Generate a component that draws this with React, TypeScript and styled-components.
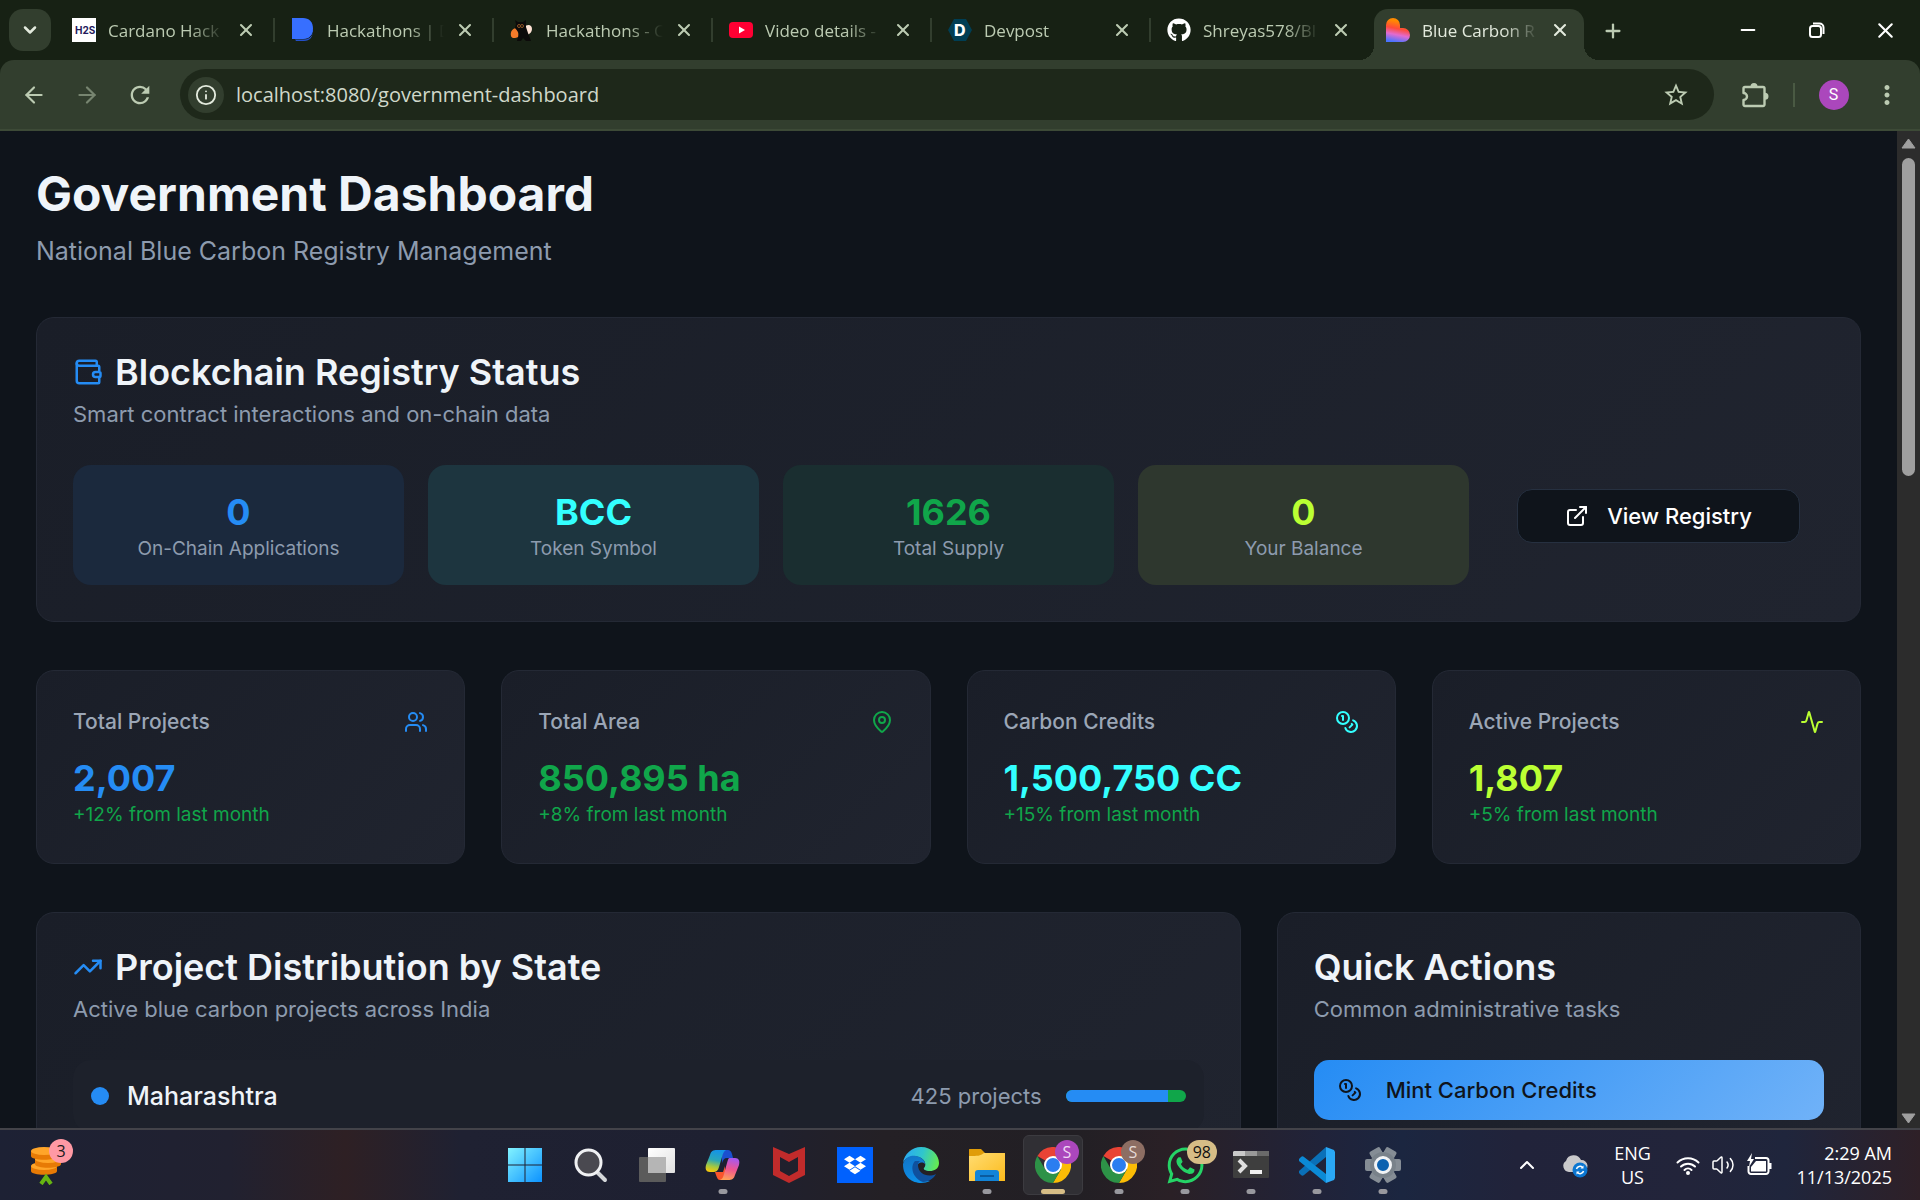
import React from 'react';
import styled, { createGlobalStyle } from 'styled-components';
import {
  Activity, ArrowLeft, ArrowRight, ChevronDown, ChevronUp, Coins, ExternalLink, Info, MapPin, Minus, Plus,
  TrendingUp, Users, Volume2, Wallet, X,
} from 'lucide-react';
import { FaDropbox, FaGithub, FaWhatsapp } from 'react-icons/fa';
import { MdRefresh, MdStarBorder, MdMoreVert } from 'react-icons/md';

const color = {
  frame: '#172114',
  toolbar: '#323e2e',
  field: '#1e281a',
  chromeText: '#bccbb2',
  page: '#0f141b',
  text: '#eff4f9',
  muted: '#8d9bae',
  blue: '#258cf4',
  green: '#10a64a',
  cyan: '#33ffff',
  lime: '#bbff33',
};

const uiFont = '"Open Sans", "Noto Sans", sans-serif';
const pageFont = 'Inter, "Noto Sans", sans-serif';

const GlobalStyle = createGlobalStyle`
  *, *::before, *::after { box-sizing: border-box; }
  body { margin: 0; background: ${color.page}; }
  h1, h2, h3, p, ul { margin: 0; padding: 0; }
  ul { list-style: none; }
  button { border: 0; padding: 0; background: none; color: inherit; font: inherit; cursor: pointer; }
  svg { display: block; flex: none; }
`;

const Desktop = styled.div`
  display: flex;
  flex-direction: column;
  height: 100vh;
  overflow: hidden;
  background: ${color.page};
  font-family: ${uiFont};
`;

/* ---------- browser frame ---------- */

const TabStrip = styled.div`
  display: flex;
  height: 60px;
  flex: none;
  padding: 0 0 0 9px;
  background: ${color.frame};
  color: ${color.chromeText};
`;

const TabSearch = styled.button`
  display: grid;
  place-items: center;
  width: 42px;
  height: 42px;
  margin: 9px 5px 0 0;
  border-radius: 14px;
  background: ${color.toolbar};
  color: #e3eadd;
`;

const Tabs = styled.div`
  display: flex;
  flex: 0 1 1533px;
  min-width: 0;
`;

const TabItem = styled.div<{ $active?: boolean; $divider?: boolean }>`
  position: relative;
  display: flex;
  flex: 1 1 0;
  align-items: center;
  min-width: 0;
  margin-top: 9px;
  padding: 0 17px 9px 16px;
  color: ${(p) => (p.$active ? '#e3eadd' : color.chromeText)};

  &::after {
    content: '';
    display: ${(p) => (p.$divider ? 'block' : 'none')};
    position: absolute;
    right: 0;
    top: 9px;
    width: 2px;
    height: 24px;
    background: ${color.toolbar};
  }
`;

const ActiveShape = styled.span`
  position: absolute;
  inset: 0 5px 0 4px;
  border-radius: 14px 14px 0 0;
  background: ${color.toolbar};

  &::before, &::after {
    content: '';
    position: absolute;
    bottom: 0;
    width: 15px;
    height: 15px;
  }
  &::before {
    right: 100%;
    background: radial-gradient(circle at 0 0, transparent 15px, ${color.toolbar} 15px);
  }
  &::after {
    left: 100%;
    background: radial-gradient(circle at 100% 0, transparent 15px, ${color.toolbar} 15px);
  }
`;

const Favicon = styled.span`
  position: relative;
  display: block;
  width: 24px;
  height: 24px;
  flex: none;
`;

const TabTitle = styled.button`
  position: relative;
  flex: 1;
  min-width: 0;
  margin: 2px 9px 0 12px;
  overflow: hidden;
  font-size: 17px;
  line-height: 24px;
  text-align: left;
  white-space: nowrap;
  mask-image: linear-gradient(90deg, #000 calc(100% - 36px), transparent);
`;

const TabClose = styled.button`
  position: relative;
  display: grid;
  place-items: center;
  width: 24px;
  height: 24px;
  flex: none;
`;

const NewTab = styled.button`
  display: grid;
  place-items: center;
  width: 48px;
  height: 60px;
  padding-top: 1px;
  color: ${color.chromeText};
`;

const WindowControls = styled.div`
  display: flex;
  margin-left: auto;
  color: #ffffff;
`;

const WindowButton = styled.button`
  display: grid;
  place-items: center;
  width: 69px;
  height: 60px;
`;

const Toolbar = styled.div`
  flex: none;
  background: ${color.frame};
`;

const ToolbarInner = styled.div`
  display: flex;
  align-items: center;
  height: 71px;
  padding: 0 7px;
  border-bottom: 2px solid #3d4a37;
  border-radius: 14px 14px 0 0;
  background: ${color.toolbar};
  color: ${color.chromeText};
`;

const ToolButton = styled.button<{ $dim?: boolean }>`
  display: grid;
  place-items: center;
  width: 53px;
  height: 48px;
  opacity: ${(p) => (p.$dim ? 0.5 : 1)};
`;

const AddressBar = styled.div`
  display: flex;
  align-items: center;
  flex: 1;
  height: 51px;
  margin: 0 14px;
  padding: 0 12px 0 8px;
  border-radius: 26px;
  background: ${color.field};
`;

const SiteInfo = styled.button`
  display: grid;
  place-items: center;
  width: 36px;
  height: 36px;
  margin-right: 12px;
  border-radius: 50%;
  background: ${color.toolbar};
  color: #e3eadd;
`;

const Address = styled.input`
  flex: 1;
  min-width: 0;
  height: 36px;
  border: 0;
  padding: 0;
  outline: 0;
  background: transparent;
  color: #d0d8ca;
  font: 20px ${uiFont};
`;

const ToolbarDivider = styled.span`
  width: 2px;
  height: 24px;
  margin: 0 12px;
  background: #4a5a43;
`;

const Avatar = styled.span`
  display: grid;
  place-items: center;
  width: 30px;
  height: 30px;
  border-radius: 50%;
  background: #ab47bc;
  color: #ffffff;
  font: 16px Roboto, sans-serif;
`;

/* ---------- page ---------- */

const Viewport = styled.div`
  display: flex;
  flex: 1;
  min-height: 0;
  overflow: hidden;
`;

const Page = styled.main`
  flex: 1;
  min-width: 0;
  height: 100%;
  padding: 36px;
  overflow: hidden;
  background: ${color.page};
  color: ${color.text};
  font-family: ${pageFont};
`;

const Scrollbar = styled.div`
  display: flex;
  flex-direction: column;
  align-items: center;
  width: 23px;
  flex: none;
  padding: 7px 0 4px;
  background: #2c2c2c;
`;

const ScrollThumb = styled.div`
  width: 13px;
  height: 318px;
  margin: 9px 0 auto;
  border-radius: 7px;
  background: #9f9f9f;
`;

const PageHeader = styled.header`
  display: grid;
  gap: 12px;
  margin-bottom: 48px;
`;

const PageTitle = styled.h1`
  font-size: 48px;
  font-weight: 700;
  line-height: 54px;
`;

const PageSubtitle = styled.p`
  color: ${color.muted};
  font-size: 25px;
  line-height: 36px;
`;

const Card = styled.section`
  min-width: 0;
  padding: 36px;
  border: 1px solid #242935;
  border-radius: 18px;
  background: linear-gradient(135deg, #1a1e28, #20242f);
`;

const CardHeader = styled.div`
  display: grid;
  gap: 9px;
  margin-bottom: 36px;
`;

const CardTitle = styled.h2`
  display: flex;
  align-items: center;
  gap: 12px;
  font-size: 36px;
  font-weight: 600;
  line-height: 36px;
  white-space: nowrap;
`;

const CardText = styled.p`
  color: ${color.muted};
  font-size: 22px;
  line-height: 30px;
`;

const TileGrid = styled.div`
  display: grid;
  grid-template-columns: repeat(5, 1fr);
  gap: 24px;
`;

const Tile = styled.div<{ $bg?: string }>`
  padding: 24px;
  border-radius: 18px;
  background: ${(p) => p.$bg ?? 'transparent'};
  text-align: center;
`;

const Value = styled.p<{ $color: string }>`
  color: ${(p) => p.$color};
  font-size: 36px;
  font-weight: 700;
  line-height: 46px;
  padding-bottom: 2px;
`;

const Caption = styled.p<{ $color?: string }>`
  color: ${(p) => p.$color ?? color.muted};
  font-size: 19px;
  line-height: 24px;
`;

const RegistryButton = styled.button`
  display: flex;
  align-items: center;
  justify-content: center;
  gap: 18px;
  width: 100%;
  height: 54px;
  border: 1px solid #263040;
  border-radius: 15px;
  background: ${color.page};
  color: #ffffff;
  font-size: 22px;
  font-weight: 500;
`;

const MetricGrid = styled.div`
  display: grid;
  grid-template-columns: repeat(4, 1fr);
  gap: 36px;
  margin: 48px 0;
`;

const MetricHead = styled.div`
  display: flex;
  align-items: center;
  justify-content: space-between;
  margin-bottom: 18px;
`;

const MetricTitle = styled.h3`
  color: #9ba6b6;
  font-size: 21px;
  font-weight: 500;
  line-height: 30px;
`;

const LowerGrid = styled.div`
  display: grid;
  grid-template-columns: repeat(3, 1fr);
  gap: 36px;

  > :first-child { grid-column: span 2; }
`;

const StateRow = styled.li`
  display: flex;
  align-items: center;
  height: 72px;
  padding: 0 18px;
  border-radius: 18px;
  background: #1d212b;
`;

const StateDot = styled.span`
  width: 18px;
  height: 18px;
  margin-right: 18px;
  border-radius: 50%;
  background: ${color.blue};
`;

const StateName = styled.span`
  flex: 1;
  font-size: 25px;
  font-weight: 500;
`;

const StateCount = styled.span`
  margin-right: 24px;
  color: ${color.muted};
  font-size: 22px;
`;

const Meter = styled.span`
  display: block;
  width: 120px;
  height: 12px;
  overflow: hidden;
  border-radius: 6px;
  background: ${color.green};
`;

const MeterFill = styled.span`
  display: block;
  height: 100%;
  background: ${color.blue};
`;

const MintButton = styled.button`
  display: flex;
  align-items: center;
  gap: 24px;
  width: 100%;
  height: 60px;
  padding: 0 24px;
  border-radius: 15px;
  background: linear-gradient(135deg, #258cf4, #70b2f8);
  color: ${color.page};
  font-size: 22px;
  font-weight: 500;
`;

/* ---------- taskbar ---------- */

const Taskbar = styled.footer`
  display: grid;
  grid-template-columns: 1fr auto 1fr;
  align-items: center;
  height: 72px;
  flex: none;
  padding: 0 28px 0 16px;
  border-top: 2px solid #434349;
  background: linear-gradient(90deg, #1d2134 0%, #212130 12%, #2e2024 18%, #1f2132 24%, #1e2031 38%,
    #242025 46%, #221f24 56%, #2a2026 61%, #20233a 69%, #1b2640 73%, #21233a 79%, #22243a 88%, #1f253c 93%, #2e2027 100%);
  color: #ffffff;
`;

const WidgetButton = styled.button`
  position: relative;
  display: grid;
  place-items: center;
  width: 60px;
  height: 60px;
`;

const Apps = styled.nav`
  display: flex;
  gap: 6px;
`;

const AppButton = styled.button<{ $active?: boolean }>`
  position: relative;
  display: grid;
  place-items: center;
  width: 60px;
  height: 60px;
  border: 1px solid ${(p) => (p.$active ? '#3c3b40' : 'transparent')};
  border-radius: 6px;
  background: ${(p) => (p.$active ? '#302f34' : 'transparent')};
`;

const RunMark = styled.span<{ $active?: boolean }>`
  position: absolute;
  bottom: 0;
  left: 50%;
  width: ${(p) => (p.$active ? 24 : 9)}px;
  height: 5px;
  border-radius: 3px;
  background: ${(p) => (p.$active ? '#d6bd86' : '#98989e')};
  transform: translateX(-50%);
`;

const Badge = styled.span<{ $bg: string; $fg: string; $wide?: boolean }>`
  position: absolute;
  top: 4px;
  right: ${(p) => (p.$wide ? -3 : 3)}px;
  min-width: 24px;
  height: 24px;
  padding: 0 ${(p) => (p.$wide ? 6 : 0)}px;
  border-radius: 12px;
  background: ${(p) => p.$bg};
  color: ${(p) => p.$fg};
  font-size: 16px;
  line-height: 24px;
  text-align: center;
`;

const Tray = styled.div`
  display: flex;
  align-items: center;
  justify-content: flex-end;
  font-size: 18px;
  line-height: 24px;
`;

const TrayButton = styled.button`
  display: grid;
  place-items: center;
  width: 48px;
  height: 48px;
`;

const Language = styled.button`
  width: 66px;
  text-align: center;
`;

const Status = styled.button`
  display: flex;
  align-items: center;
  gap: 11px;
  padding: 0 24px 0 11px;
`;

const Clock = styled.button`
  text-align: right;
  white-space: nowrap;
`;

/* ---------- drawings ---------- */

const svgBox = { width: 24, height: 24, viewBox: '0 0 24 24' };
const appBox = { width: 36, height: 36, viewBox: '0 0 36 36' };

const Favicons: Record<string, React.ReactNode> = {
  hack: (
    <svg {...svgBox}>
      <rect width="24" height="24" fill="#fff" />
      <text x="3" y="16" fontFamily="Inter, sans-serif" fontSize="10" fontWeight="700" fill="#241a5c">H2S</text>
    </svg>
  ),
  dora: (
    <svg {...svgBox}>
      <path d="M2 18l3 5h8c6 0 9-4 9-11z" fill="#2450c8" />
      <path d="M2 20l2 1h9c5 0 8-3 9-7" fill="none" stroke="#172114" strokeWidth="1" />
      <path d="M1 0h11c6 0 10 4 10 10.500S18 21 12 21H1z" fill="#376fff" />
    </svg>
  ),
  cat: (
    <svg {...svgBox}>
      <path d="M1 18c-1-5 2-8 6-8l2 9c-4 1-7 2-8-1z" fill="#f47b2a" />
      <path d="M14 9c3-3 8-3 8 2 0 3-2 5-5 6z" fill="#ffe3d6" />
      <path d="M5 2l3 2h5l3-2v7l2 6 3 8h-5l-3-3-2 3H7l2-8-4-5 1-4z" fill="#0c0a0a" />
      <circle cx="9" cy="8" r="1.500" fill="none" stroke="#8c5324" />
      <circle cx="12" cy="8" r="1.500" fill="none" stroke="#8c5324" />
    </svg>
  ),
  video: (
    <svg {...svgBox}>
      <rect y="4" width="24" height="16" rx="4" fill="#ff0033" />
      <path d="M10 8.500v7l6-3.500z" fill="#fff" />
    </svg>
  ),
  devpost: (
    <svg {...svgBox}>
      <path d="M6 1h12l6 11-6 11H6L0 12z" fill="#003e54" />
      <text x="6" y="18" fontFamily="Inter, sans-serif" fontSize="16" fontWeight="800" fill="#fff">D</text>
    </svg>
  ),
  github: <FaGithub size={24} color="#fff" />,
  lovable: (
    <svg {...svgBox}>
      <defs>
        <linearGradient id="heart" x1="0.600" y1="0" x2="0.400" y2="1">
          <stop offset="0.150" stopColor="#ff8a00" />
          <stop offset="0.450" stopColor="#ff4b3a" />
          <stop offset="0.700" stopColor="#e26bd0" />
          <stop offset="1" stopColor="#4b73ff" />
        </linearGradient>
      </defs>
      <path d="M0 7a7 7 0 0 1 14 0v3h3a7 7 0 0 1 0 14H0z" fill="url(#heart)" />
    </svg>
  ),
};

const RestoreIcon = () => (
  <svg width="16" height="16" viewBox="0 0 16 16" fill="none" stroke="#fff" strokeWidth="2">
    <rect x="1" y="4" width="11" height="11" rx="2.500" />
    <path d="M4 1.500h6.500a4 4 0 0 1 4 4V12" />
  </svg>
);

const ExtensionsIcon = () => (
  <svg width="28" height="28" viewBox="0 0 28 28">
    <path
      d="M4 6h18a1.500 1.500 0 0 1 1.500 1.500v16A1.500 1.500 0 0 1 22 25H4a1.500 1.500 0 0 1-1.500-1.500v-4.500a3.500 3.500 0 0 0 0-7V7.500A1.500 1.500 0 0 1 4 6z"
      fill="none"
      stroke="currentColor"
      strokeWidth="2.400"
      strokeLinejoin="round"
    />
    <path d="M9.500 5.500a3.500 3.500 0 0 1 7 0zM24 11.800a3.500 3.500 0 0 1 0 7z" fill="currentColor" />
  </svg>
);

const CoinStackIcon = () => (
  <svg width="30" height="40" viewBox="0 0 30 40">
    {[20, 13, 5].map((y, i) => (
      <g key={y} transform={`translate(${i === 1 ? 4 : 0} ${y - 3})`}>
        <path d="M0 4v5c0 5 26 5 26 0V4z" fill="#e77a05" />
        <ellipse cx="13" cy="4" rx="13" ry="4" fill="#ffa529" />
      </g>
    ))}
    <path d="M10 39l5-7 5 7" fill="none" stroke="#67b512" strokeWidth="4" />
  </svg>
);

const StartIcon = () => (
  <svg {...appBox}>
    <defs>
      <linearGradient id="start" x1="0" y1="0" x2="1" y2="1">
        <stop stopColor="#82f3ff" />
        <stop offset="1" stopColor="#0c92ff" />
      </linearGradient>
    </defs>
    <path d="M1 1h16.500v16.500H1zM18.500 1H35v16.500H18.500zM1 18.500h16.500V35H1zM18.500 18.500H35V35H18.500z" fill="url(#start)" />
  </svg>
);

const SearchIcon = () => (
  <svg {...appBox}>
    <path d="M24 25l8 8" stroke="#d5d7da" strokeWidth="4" strokeLinecap="round" />
    <circle cx="15.500" cy="15.500" r="12.500" fill="#4a4950" stroke="#f0f1f3" strokeWidth="3" />
  </svg>
);

const TaskViewIcon = () => (
  <svg {...appBox}>
    <defs>
      <linearGradient id="pane" x1="0" y1="0" x2="1" y2="1">
        <stop stopColor="#ffffff" />
        <stop offset="1" stopColor="#e0e0e0" />
      </linearGradient>
    </defs>
    <rect x="0" y="10" width="27" height="25" rx="1" fill="#5b5b5b" />
    <rect x="9" y="1" width="27" height="25" rx="1" fill="url(#pane)" />
    <rect x="9" y="10" width="18" height="16" fill="#b5b5b5" />
  </svg>
);

const CopilotIcon = () => (
  <svg {...appBox}>
    <defs>
      <linearGradient id="cpA" x1="0.500" y1="0" x2="0.300" y2="1">
        <stop stopColor="#1493e8" />
        <stop offset="0.450" stopColor="#2aa7b8" />
        <stop offset="0.750" stopColor="#a5c840" />
        <stop offset="1" stopColor="#f7c90b" />
      </linearGradient>
      <linearGradient id="cpB" x1="0.600" y1="0" x2="0.400" y2="1">
        <stop stopColor="#a658f0" />
        <stop offset="0.500" stopColor="#ef5590" />
        <stop offset="1" stopColor="#ffa057" />
      </linearGradient>
    </defs>
    <path d="M17 3h6c2 0 3 1 4 4l1 4h-6c-3 0-4 2-5 5z" fill="#1b4fd0" />
    <path d="M10 25h8l2-6v8c-1 4-1 6 1 6h-6c-2 0-3-2-4-5z" fill="#f9552c" />
    <path d="M12 3h9c-2 1-3 3-4 7l-3 10c-1 4-3 5-6 5H5c-4 0-5-3-4-7L5 8c1-4 3-5 7-5z" fill="url(#cpA)" />
    <path d="M25 11h5c4 0 5 3 4 7l-4 10c-1 4-3 5-7 5h-8c2-1 3-2 4-6l3-11c1-3 1-5 3-5z" fill="url(#cpB)" />
  </svg>
);

const McAfeeIcon = () => (
  <svg {...appBox}>
    <path d="M2 0l16 7 16-7v28l-16 8L2 28zM9 10v14l9 5 9-5V10l-9 5z" fill="#c12b2b" fillRule="evenodd" />
  </svg>
);

const DropboxTile = styled.span`
  display: grid;
  place-items: center;
  width: 36px;
  height: 36px;
  background: #0061fe;
  color: #ffffff;
`;

const EdgeIcon = () => (
  <svg {...appBox}>
    <defs>
      <linearGradient id="edgeTop" x1="0" y1="0.400" x2="1" y2="0.600">
        <stop stopColor="#2aa9f3" />
        <stop offset="0.500" stopColor="#30c6cc" />
        <stop offset="1" stopColor="#66eb4e" />
      </linearGradient>
      <linearGradient id="edgeLow" x1="0" y1="0" x2="0.300" y2="1">
        <stop stopColor="#1272c4" />
        <stop offset="1" stopColor="#0c8fe8" />
      </linearGradient>
    </defs>
    <path d="M0 16C1 7 9 0 18 0c11 0 18 8 18 16 0 6-5 8-9 8-5 0-7-2-6-3 3-3 1-9-5-11C9 8 2 11 0 16z" fill="url(#edgeTop)" />
    <path d="M0 17c2-7 8-9 13-8 5 1 9 4 9 8-1-2-7-3-8 3-1 6 5 14 13 14-10 5-27 1-27-17z" fill="url(#edgeLow)" />
    <path d="M12 14c-5 5-3 17 8 21 6 0 11-4 13-8-8 4-18 0-18-9 0-2 1-4 3-4z" fill="#0f519e" />
  </svg>
);

const FolderIcon = () => (
  <svg {...appBox}>
    <defs>
      <linearGradient id="folder" x1="0" y1="0" x2="1" y2="1">
        <stop stopColor="#ffdc72" />
        <stop offset="1" stopColor="#fcbb1c" />
      </linearGradient>
    </defs>
    <path d="M0 3c0-1 0-1 1-1h11l4 4H36v5H0z" fill="#e09c08" />
    <path d="M0 9c9 0 11 0 15-3h20c1 0 1 0 1 1v27H0z" fill="url(#folder)" />
    <path d="M6 34v-8c0-2 1-3 3-3h18c2 0 3 1 3 3v8z" fill="#1284d8" />
    <path d="M11 29h14" stroke="#0b5b9e" strokeWidth="2" />
  </svg>
);

const ChromeIcon = () => (
  <svg {...appBox}>
    <path d="M18 18L2.400 9A18 18 0 0 1 33.600 9z" fill="#e94335" />
    <path d="M18 9h15.600A18 18 0 0 1 18 36l7.800-13.500z" fill="#fbbc05" />
    <path d="M25.800 22.500L18 36A18 18 0 0 1 2.400 9l7.800 13.500z" fill="#2d9247" />
    <circle cx="18" cy="18" r="9" fill="#fff" />
    <circle cx="18" cy="18" r="7" fill="#2b7df0" />
  </svg>
);

const TerminalIcon = () => (
  <svg {...appBox}>
    <rect y="4" width="36" height="27" rx="1" fill="#3e3e3e" />
    <path d="M0 9V5l1-1h11v5z" fill="#c9c9c9" />
    <path d="M12 4h12v5H12z" fill="#999" />
    <path d="M24 4h12v5H24z" fill="#6a6a6a" />
    <path d="M6 13l6 6-6 6" fill="none" stroke="#dedede" strokeWidth="4" />
    <rect x="17" y="23" width="12" height="4" fill="#f0f0f0" />
  </svg>
);

const CodeIcon = () => (
  <svg {...appBox}>
    <path d="M27 0v10L5 28c-1 1-2 1-3 0l-2-2v-2z" fill="#0a70b8" />
    <path d="M0 12l2-2c1-1 2-1 3 0l22 17v9L0 14z" fill="#0b8ad6" />
    <path d="M27 0l8 3 1 2v26l-1 2-8 3z" fill="#2aa8f5" />
  </svg>
);

const GearIcon = () => (
  <svg {...appBox}>
    {[0, 60, 120].map((turn) => (
      <rect key={turn} x="12" y="0" width="12" height="36" rx="2" fill="#858d95" transform={`rotate(${turn + 30} 18 18)`} />
    ))}
    <circle cx="18" cy="18" r="13" fill="#79828a" />
    <circle cx="18" cy="18" r="7.500" fill="#0c62b0" stroke="#f1f3f5" strokeWidth="3" />
  </svg>
);

const CloudIcon = () => (
  <svg width="26" height="26" viewBox="0 0 26 26">
    <path d="M7 20a6 6 0 0 1-3-11A8 8 0 0 1 19 8a6 6 0 0 1 1 12z" fill="#c9c9cb" />
    <circle cx="18" cy="18" r="7.500" fill="#0b76d1" />
    <path d="M14.500 17a3.500 3.500 0 0 1 6-1.500M21.500 19a3.500 3.500 0 0 1-6 1.500" fill="none" stroke="#fff" strokeWidth="1.500" />
    <path d="M21.500 13.500v3h-3zM14.500 22.500v-3h3z" fill="#fff" />
  </svg>
);

const WifiIcon = () => (
  <svg width="24" height="20" viewBox="0 0 24 20" fill="none" stroke="#fff" strokeWidth="2" strokeLinecap="round">
    <path d="M1.500 7.500a15 15 0 0 1 21 0M5 11.500a10 10 0 0 1 14 0M8.500 15a5 5 0 0 1 7 0" />
    <circle cx="12" cy="18" r="1" fill="#fff" />
  </svg>
);

const BatteryIcon = () => (
  <svg width="26" height="24" viewBox="0 0 26 24">
    <path d="M9 5h11a2.500 2.500 0 0 1 2.500 2.500v11A2.500 2.500 0 0 1 20 21H5a2.500 2.500 0 0 1-2.500-2.500V13" fill="none" stroke="#fff" strokeWidth="2" />
    <path d="M10 8h10v10.500H5V14z" fill="#fff" />
    <path d="M23 10h2.500v6H23zM6 0L1 8h3l-1 6 5-8H5z" fill="#fff" />
  </svg>
);

const ScrollArrow = ({ down }: { down?: boolean }) => (
  <svg width="15" height="11" viewBox="0 0 15 11">
    <path d={down ? 'M1 1h13L7.500 10z' : 'M1 10h13L7.500 1z'} fill="#9f9f9f" stroke="#9f9f9f" strokeLinejoin="round" />
  </svg>
);

/* ---------- data ---------- */

const tabs = [
  { icon: 'hack', title: 'Cardano Hack' },
  { icon: 'dora', title: 'Hackathons | D' },
  { icon: 'cat', title: 'Hackathons - C' },
  { icon: 'video', title: 'Video details -' },
  { icon: 'devpost', title: 'Devpost' },
  { icon: 'github', title: 'Shreyas578/Bl' },
  { icon: 'lovable', title: 'Blue Carbon R', active: true },
];

const tiles = [
  { value: '0', label: 'On-Chain Applications', tone: color.blue, bg: '#1b293d' },
  { value: 'BCC', label: 'Token Symbol', tone: color.cyan, bg: '#1d353f' },
  { value: '1626', label: 'Total Supply', tone: color.green, bg: '#1a2e30' },
  { value: '0', label: 'Your Balance', tone: color.lime, bg: '#2e372e' },
];

const metrics = [
  { title: 'Total Projects', value: '2,007', change: '+12% from last month', tone: color.blue, Icon: Users },
  { title: 'Total Area', value: '850,895 ha', change: '+8% from last month', tone: color.green, Icon: MapPin },
  { title: 'Carbon Credits', value: '1,500,750 CC', change: '+15% from last month', tone: color.cyan, Icon: Coins },
  { title: 'Active Projects', value: '1,807', change: '+5% from last month', tone: color.lime, Icon: Activity },
];

const states = [{ name: 'Maharashtra', count: 425, share: 85 }];

type TaskbarApp = {
  name: string;
  icon: React.ReactNode;
  running?: boolean;
  active?: boolean;
  badge?: { text: string; bg: string; fg: string; wide?: boolean };
};

const apps: TaskbarApp[] = [
  { name: 'Start', icon: <StartIcon /> },
  { name: 'Search', icon: <SearchIcon /> },
  { name: 'Task view', icon: <TaskViewIcon /> },
  { name: 'Copilot', icon: <CopilotIcon />, running: true },
  { name: 'McAfee', icon: <McAfeeIcon /> },
  { name: 'Dropbox', icon: <DropboxTile><FaDropbox size={22} /></DropboxTile> },
  { name: 'Edge', icon: <EdgeIcon /> },
  { name: 'File Explorer', icon: <FolderIcon />, running: true },
  { name: 'Chrome', icon: <ChromeIcon />, running: true, active: true, badge: { text: 'S', bg: '#ab47bc', fg: '#f0d8f4' } },
  { name: 'Chrome, second profile', icon: <ChromeIcon />, running: true, badge: { text: 'S', bg: '#8d6e63', fg: '#e6dbd7' } },
  { name: 'WhatsApp', icon: <FaWhatsapp size={41} color="#25d366" />, running: true, badge: { text: '98', bg: '#d6bd86', fg: '#101010', wide: true } },
  { name: 'Terminal', icon: <TerminalIcon />, running: true },
  { name: 'Visual Studio Code', icon: <CodeIcon />, running: true },
  { name: 'Settings', icon: <GearIcon />, running: true },
];

/* ---------- sections ---------- */

const Browser = () => (
  <>
    <TabStrip>
      <TabSearch aria-label="Search tabs"><ChevronDown size={20} strokeWidth={3} /></TabSearch>
      <Tabs>
        {tabs.map((tab, i) => (
          <TabItem key={tab.icon} $active={tab.active} $divider={i < tabs.length - 2}>
            {tab.active && <ActiveShape />}
            <Favicon>{Favicons[tab.icon]}</Favicon>
            <TabTitle>{tab.title}</TabTitle>
            <TabClose aria-label={`Close ${tab.title}`}><X size={20} strokeWidth={2.5} /></TabClose>
          </TabItem>
        ))}
      </Tabs>
      <NewTab aria-label="New tab"><Plus size={22} strokeWidth={2.5} /></NewTab>
      <WindowControls>
        <WindowButton aria-label="Minimize"><Minus size={22} /></WindowButton>
        <WindowButton aria-label="Restore"><RestoreIcon /></WindowButton>
        <WindowButton aria-label="Close window"><X size={25} strokeWidth={2} /></WindowButton>
      </WindowControls>
    </TabStrip>
    <Toolbar>
      <ToolbarInner>
        <ToolButton aria-label="Back"><ArrowLeft size={26} /></ToolButton>
        <ToolButton aria-label="Forward" $dim><ArrowRight size={26} /></ToolButton>
        <ToolButton aria-label="Reload"><MdRefresh size={28} /></ToolButton>
        <AddressBar>
          <SiteInfo aria-label="Site information"><Info size={22} /></SiteInfo>
          <Address aria-label="Address" defaultValue="localhost:8080/government-dashboard" />
          <ToolButton aria-label="Bookmark this page"><MdStarBorder size={28} /></ToolButton>
        </AddressBar>
        <ToolButton aria-label="Extensions"><ExtensionsIcon /></ToolButton>
        <ToolbarDivider />
        <ToolButton aria-label="Profile"><Avatar>S</Avatar></ToolButton>
        <ToolButton aria-label="Menu"><MdMoreVert size={30} /></ToolButton>
      </ToolbarInner>
    </Toolbar>
  </>
);

const Dashboard = () => (
  <Page>
    <PageHeader>
      <PageTitle>Government Dashboard</PageTitle>
      <PageSubtitle>National Blue Carbon Registry Management</PageSubtitle>
    </PageHeader>

    <Card>
      <CardHeader>
        <CardTitle><Wallet size={30} color={color.blue} />Blockchain Registry Status</CardTitle>
        <CardText>Smart contract interactions and on-chain data</CardText>
      </CardHeader>
      <TileGrid>
        {tiles.map((tile) => (
          <Tile key={tile.label} $bg={tile.bg}>
            <Value $color={tile.tone}>{tile.value}</Value>
            <Caption>{tile.label}</Caption>
          </Tile>
        ))}
        <Tile>
          <RegistryButton><ExternalLink size={24} />View Registry</RegistryButton>
        </Tile>
      </TileGrid>
    </Card>

    <MetricGrid>
      {metrics.map(({ title, value, change, tone, Icon }) => (
        <Card key={title}>
          <MetricHead>
            <MetricTitle>{title}</MetricTitle>
            <Icon size={24} color={tone} />
          </MetricHead>
          <Value $color={tone}>{value}</Value>
          <Caption $color={color.green}>{change}</Caption>
        </Card>
      ))}
    </MetricGrid>

    <LowerGrid>
      <Card>
        <CardHeader>
          <CardTitle><TrendingUp size={30} color={color.blue} />Project Distribution by State</CardTitle>
          <CardText>Active blue carbon projects across India</CardText>
        </CardHeader>
        <ul>
          {states.map((state) => (
            <StateRow key={state.name}>
              <StateDot />
              <StateName>{state.name}</StateName>
              <StateCount>{state.count} projects</StateCount>
              <Meter><MeterFill style={{ width: `${state.share}%` }} /></Meter>
            </StateRow>
          ))}
        </ul>
      </Card>
      <Card>
        <CardHeader>
          <CardTitle>Quick Actions</CardTitle>
          <CardText>Common administrative tasks</CardText>
        </CardHeader>
        <MintButton><Coins size={24} />Mint Carbon Credits</MintButton>
      </Card>
    </LowerGrid>
  </Page>
);

const WindowsTaskbar = () => (
  <Taskbar>
    <WidgetButton aria-label="Widgets">
      <CoinStackIcon />
      <Badge $bg="#ff99a4" $fg="#1a1a1a">3</Badge>
    </WidgetButton>
    <Apps aria-label="Applications">
      {apps.map((app) => (
        <AppButton key={app.name} aria-label={app.name} $active={app.active}>
          {app.icon}
          {app.badge && <Badge $bg={app.badge.bg} $fg={app.badge.fg} $wide={app.badge.wide}>{app.badge.text}</Badge>}
          {app.running && <RunMark $active={app.active} />}
        </AppButton>
      ))}
    </Apps>
    <Tray>
      <TrayButton aria-label="Show hidden icons"><ChevronUp size={24} /></TrayButton>
      <TrayButton aria-label="OneDrive"><CloudIcon /></TrayButton>
      <Language>ENG<br />US</Language>
      <Status aria-label="Network, sound and battery">
        <WifiIcon />
        <Volume2 size={24} strokeWidth={1.5} />
        <BatteryIcon />
      </Status>
      <Clock>2:29 AM<br />11/13/2025</Clock>
    </Tray>
  </Taskbar>
);

export default function App() {
  return (
    <Desktop>
      <GlobalStyle />
      <Browser />
      <Viewport>
        <Dashboard />
        <Scrollbar>
          <ScrollArrow />
          <ScrollThumb />
          <ScrollArrow down />
        </Scrollbar>
      </Viewport>
      <WindowsTaskbar />
    </Desktop>
  );
}
